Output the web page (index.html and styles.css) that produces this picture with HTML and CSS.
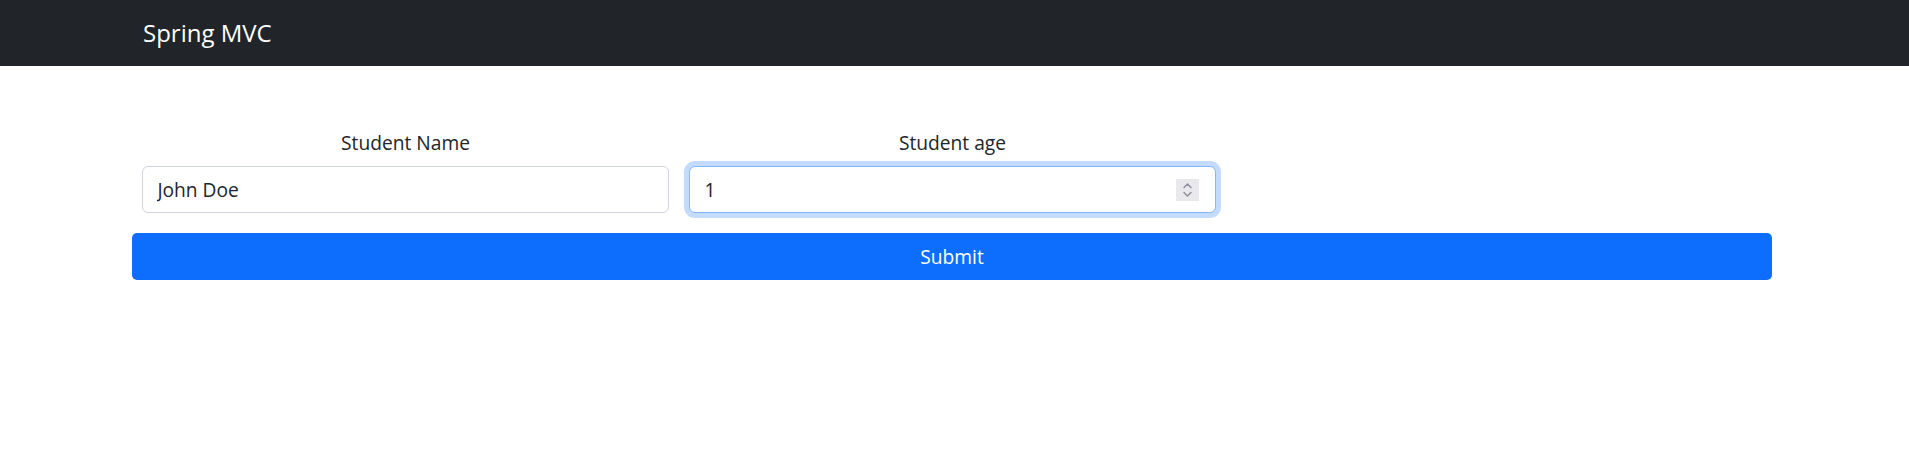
FILE: index.html
```html
<!DOCTYPE html>
<html lang="en">
<head>
<meta charset="utf-8">
<title>Spring MVC</title>
<link rel="stylesheet" href="styles.css">
</head>
<body>
<nav class="navbar">
  <div class="nav-inner">
    <a class="brand" href="#">Spring MVC</a>
  </div>
</nav>
<main class="container">
  <form class="form">
    <div class="row">
      <div class="col">
        <label class="form-label" for="name">Student Name</label>
        <div class="field">
          <input class="field-input" id="name" type="text" value="John Doe">
        </div>
      </div>
      <div class="col">
        <label class="form-label" for="age">Student age</label>
        <div class="field field-focus">
          <input class="field-input" id="age" type="text" value="1">
          <span class="spinner">
            <svg width="23" height="22" viewBox="0 0 23 22" aria-hidden="true">
              <path d="M8 8.5 L11.5 5 L15 8.5" fill="none" stroke="#8f8f9d" stroke-width="1.5" stroke-linecap="round" stroke-linejoin="round"/>
              <path d="M8 13.5 L11.5 17 L15 13.5" fill="none" stroke="#8f8f9d" stroke-width="1.5" stroke-linecap="round" stroke-linejoin="round"/>
            </svg>
          </span>
        </div>
      </div>
      <div class="col"></div>
    </div>
    <button class="btn-submit" type="submit">Submit</button>
  </form>
</main>
</body>
</html>
```

FILE: styles.css
```css
* {
  box-sizing: border-box;
}

html, body {
  margin: 0;
  padding: 0;
  background: #fff;
}

body {
  font-family: "Open Sans", "Noto Sans", sans-serif;
  font-size: 19.2px;
  line-height: 1.5;
  color: #212529;
}

.navbar {
  background: #212529;
  height: 66px;
  display: flex;
  align-items: center;
}

.nav-inner {
  padding-left: 143px;
}

.brand {
  color: #fff;
  font-size: 24px;
  line-height: 36px;
  text-decoration: none;
  display: block;
}

.container {
  margin-left: 132px;
  width: 1641px;
  padding-top: 62px;
}

.row {
  display: grid;
  grid-template-columns: repeat(3, 1fr);
}

.col {
  padding: 0 10px;
}

.form-label {
  display: block;
  text-align: center;
  line-height: 29px;
  margin-bottom: 9px;
}

.field {
  display: flex;
  align-items: center;
  height: 47px;
  border: 1px solid #ced4da;
  border-radius: 6px;
  background: #fff;
  padding: 0 14px 0 14.4px;
}

.field-focus {
  border-color: #86b7fe;
  box-shadow: 0 0 0 5px #c2dbfe;
  padding-right: 16px;
}

.field-input {
  flex: 1;
  min-width: 0;
  border: 0;
  outline: none;
  padding: 0;
  background: transparent;
  font-family: inherit;
  font-size: 19.2px;
  color: #212529;
  line-height: 29px;
}

.spinner {
  display: flex;
  width: 23px;
  height: 22px;
  background: #e9e9ed;
  margin-top: 1px;
}

.btn-submit {
  display: block;
  width: 1640px;
  height: 47px;
  margin-top: 20px;
  border: 0;
  border-radius: 5px;
  background: #0d6efd;
  color: #fff;
  font-family: inherit;
  font-size: 19.2px;
  line-height: 29px;
  cursor: pointer;
}
```
